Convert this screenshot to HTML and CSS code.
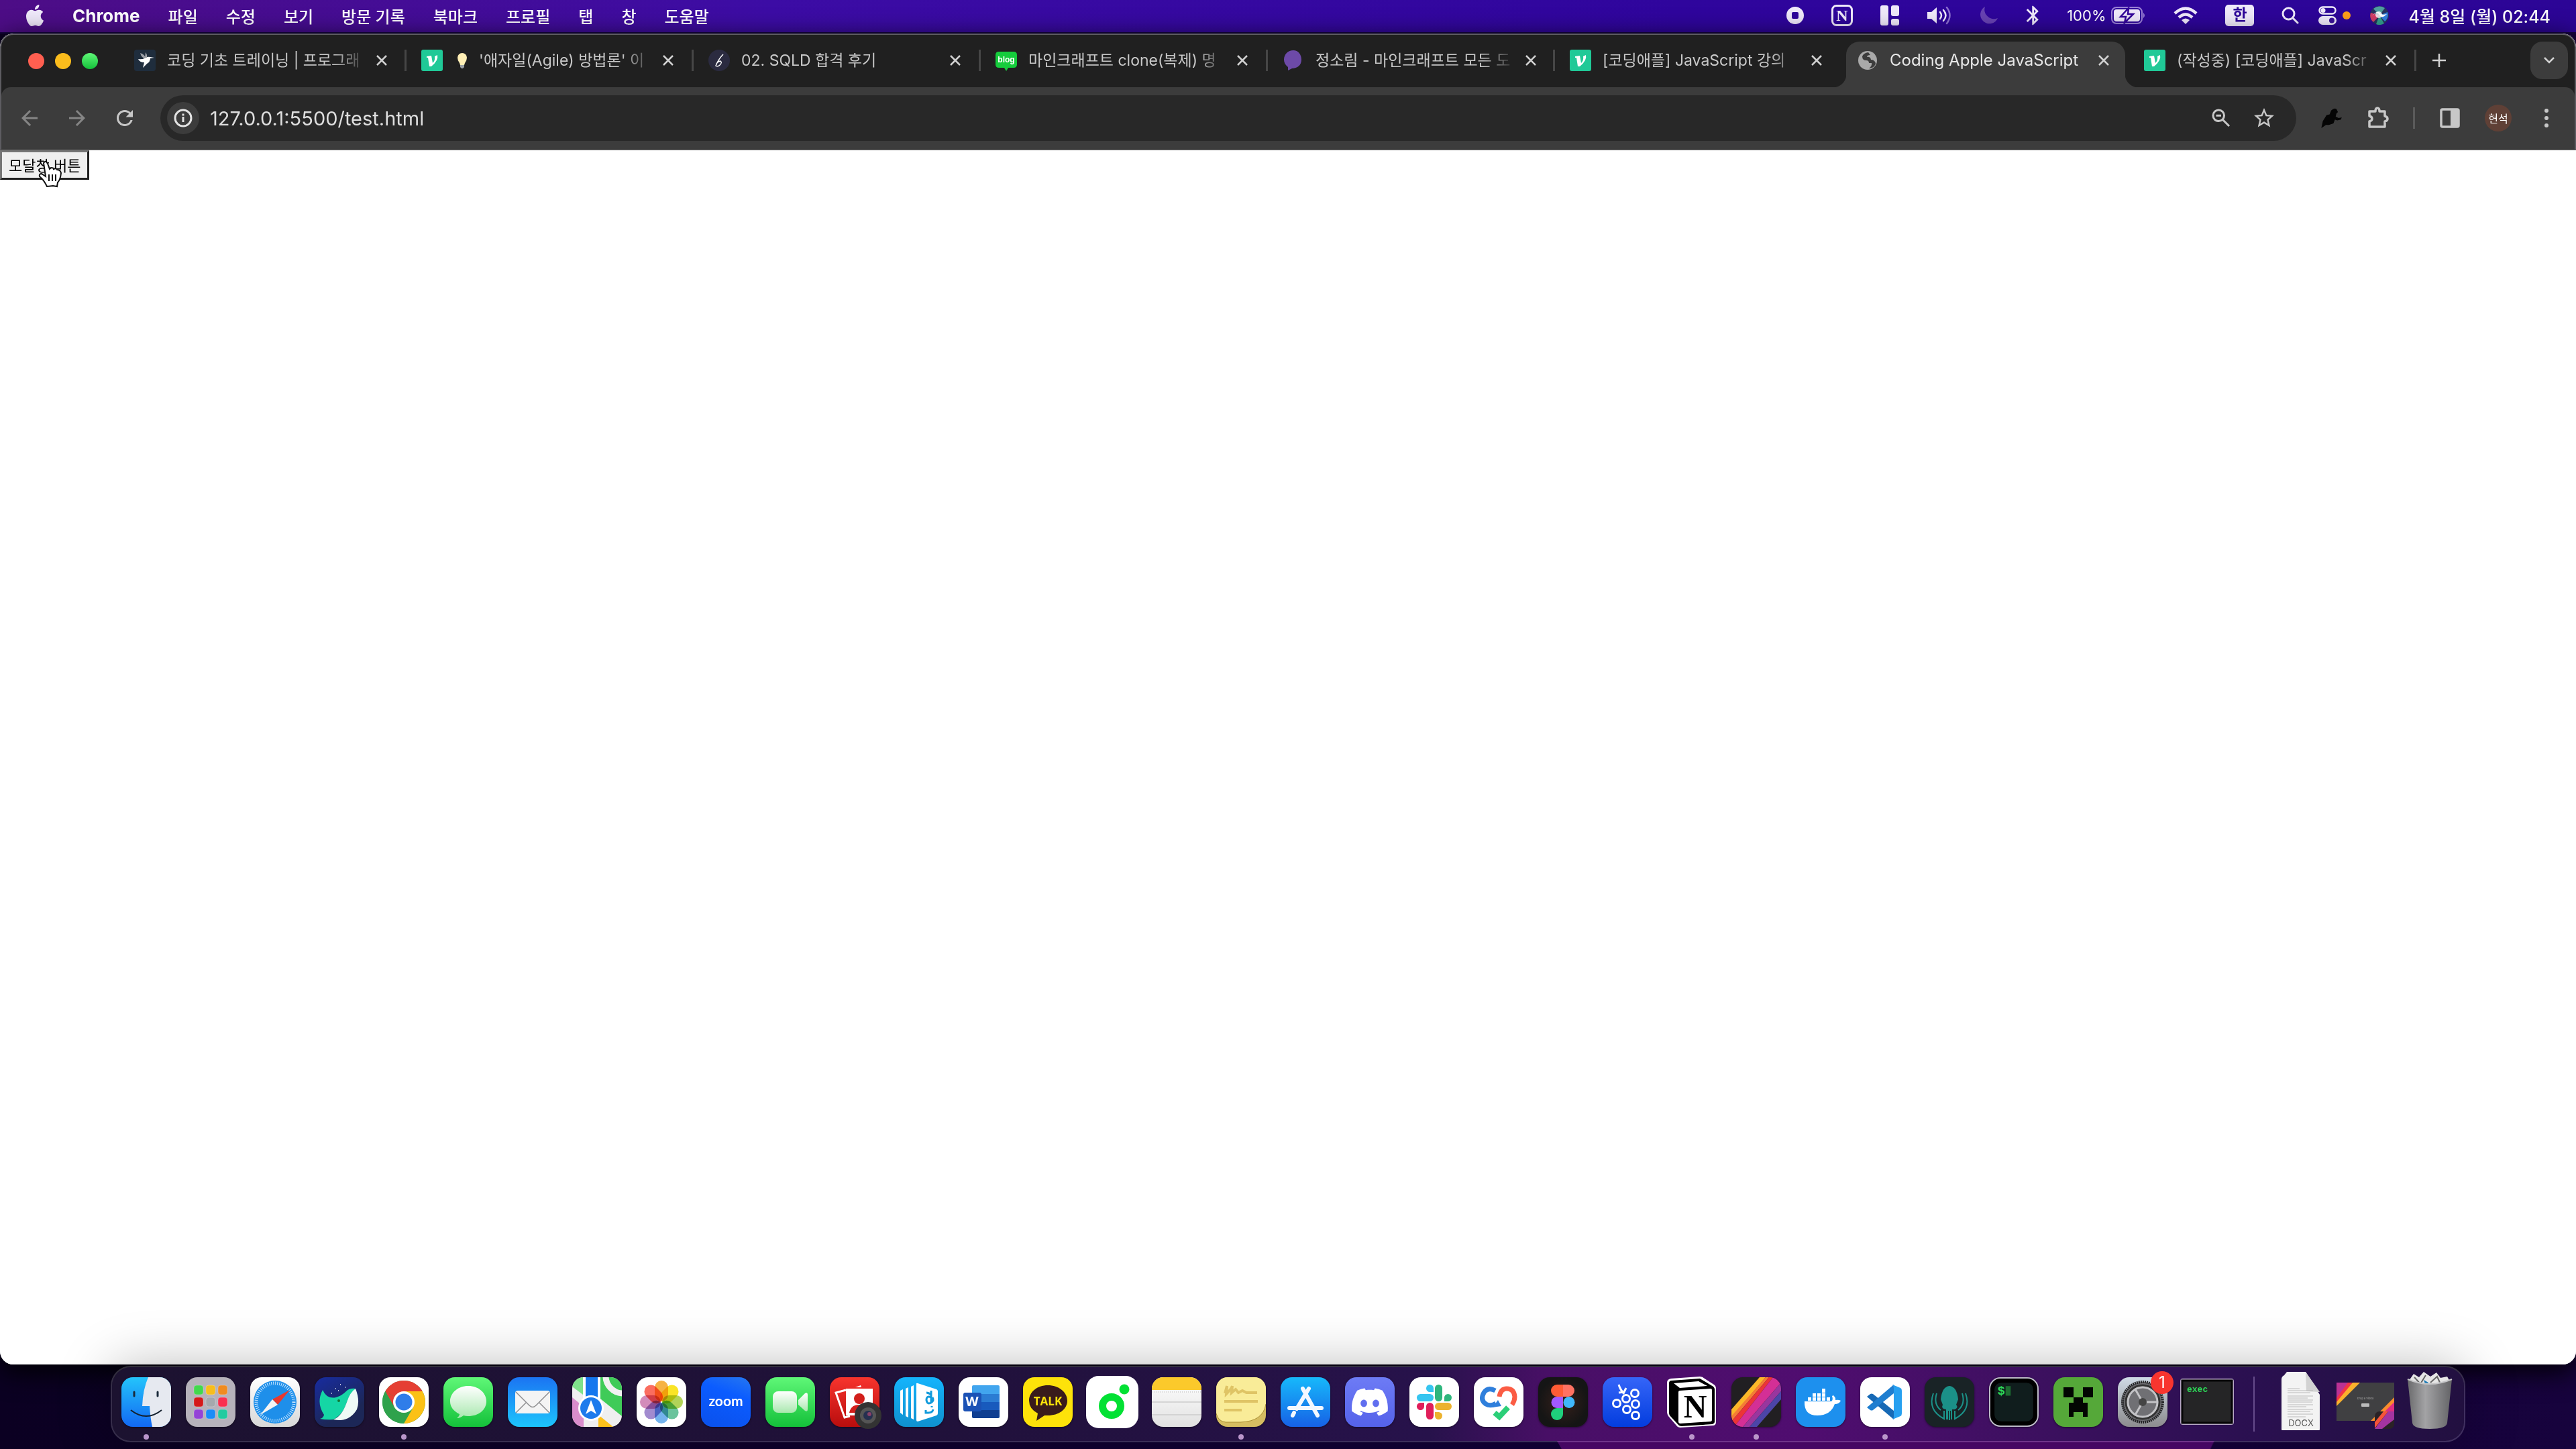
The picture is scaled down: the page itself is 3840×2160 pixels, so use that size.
FILE: index.html
```html
<!DOCTYPE html>
<html lang="ko">
<head>
    <meta charset="UTF-8">
    <meta name="viewport" content="width=device-width, initial-scale=1.0">
    <title>Coding Apple JavaScript</title>
    <link rel="stylesheet" href="styles.css">
</head>
<body>
    <header class="menubar">
        <nav class="menus">
            <svg class="apple" viewBox="3 0 18 24"><path d="M12.152 6.896c-.948 0-2.415-1.078-3.96-1.04-2.04.027-3.91 1.183-4.961 3.014-2.117 3.675-.546 9.103 1.519 12.09 1.013 1.454 2.208 3.09 3.792 3.039 1.52-.065 2.09-.987 3.935-.987 1.831 0 2.35.987 3.96.948 1.637-.026 2.676-1.48 3.676-2.948 1.156-1.688 1.636-3.325 1.662-3.415-.039-.013-3.182-1.221-3.22-4.857-.026-3.04 2.48-4.494 2.597-4.559-1.429-2.09-3.623-2.324-4.39-2.376-2-.156-3.675 1.09-4.61 1.09zM15.53 3.83c.843-1.012 1.4-2.427 1.245-3.83-1.207.052-2.662.805-3.532 1.818-.78.896-1.454 2.338-1.273 3.714 1.338.104 2.715-.688 3.559-1.701"/></svg>
            <button class="app-name">Chrome</button>
            <button>파일</button>
            <button>수정</button>
            <button>보기</button>
            <button>방문 기록</button>
            <button>북마크</button>
            <button>프로필</button>
            <button>탭</button>
            <button>창</button>
            <button>도움말</button>
        </nav>
        <div class="status">
            <svg width="26" height="26" viewBox="0 0 26 26"><path fill-rule="evenodd" d="M13 0a13 13 0 1 0 0 26 13 13 0 0 0 0-26zM10 8h6a2 2 0 0 1 2 2v6a2 2 0 0 1-2 2h-6a2 2 0 0 1-2-2v-6a2 2 0 0 1 2-2z"/></svg>
            <svg width="32" height="32" viewBox="0 0 32 32"><rect x="1.5" y="1.5" width="29" height="29" rx="6" fill="none" stroke="#efe9fa" stroke-width="3"/><text x="16" y="24" text-anchor="middle" class="serif-n small">N</text></svg>
            <svg width="28" height="30" viewBox="0 0 28 30"><rect width="12" height="30" rx="3"/><rect x="16" width="12" height="16" rx="3"/><rect x="16" y="20" width="12" height="10" rx="3"/></svg>
            <svg width="38" height="28" viewBox="0 0 38 28"><path d="M1 9h6l8-7v24l-8-7H1z"/><path d="M20 9q4 5 0 10M25 6q7 8 0 16" fill="none" stroke="#efe9fa" stroke-width="2.5" stroke-linecap="round"/><path d="M30 2q9 12 0 24" fill="none" stroke="#8d6fd0" stroke-width="2.5" stroke-linecap="round"/></svg>
            <svg width="28" height="28" viewBox="0 0 28 28"><path d="M8 1a13.5 13.5 0 1 0 19 17A14 14 0 0 1 8 1z" fill="#6843b3"/></svg>
            <svg width="20" height="30" viewBox="4.5 2 14 20"><path d="M17.71 7.71L12 2h-1v7.59L6.41 5 5 6.41 10.59 12 5 17.59 6.41 19 11 14.41V22h1l5.71-5.71-4.3-4.29 4.3-4.29zM13 5.83l1.88 1.88L13 9.59V5.83zm1.88 10.46L13 18.17v-3.76l1.88 1.88z"/></svg>
            <div class="battery">
                <span>100%</span>
                <svg width="52" height="26" viewBox="0 0 52 26"><rect x="1" y="1" width="45" height="24" rx="7" fill="none" stroke="#9a80d6" stroke-width="2"/><rect x="4" y="4" width="39" height="18" rx="4"/><path d="M48 9q4 4 0 8z" fill="#9a80d6"/><path d="M26 2L14 15h8l-2 9 13-13h-8z" stroke="#320599" stroke-width="2.5"/></svg>
            </div>
            <svg width="36" height="26" viewBox="0 0 36 26"><g fill="none" stroke="#efe9fa" stroke-width="4.5"><path d="M2 10Q18-5 34 10"/><path d="M8 16Q18 7 28 16"/></g><path d="M12 20q6-5 12 0l-6 6z"/></svg>
            <span class="ime">한</span>
            <div class="status-end">
                <svg width="26" height="26" viewBox="0 0 26 26"><g fill="none" stroke="#efe9fa" stroke-width="3" stroke-linecap="round"><circle cx="10.5" cy="10.5" r="8.5"/><path d="M17 17l7 7"/></g></svg>
                <svg width="48" height="28" viewBox="0 0 48 28"><rect x="1.5" y="1.5" width="24" height="10" rx="5" fill="none" stroke="#efe9fa" stroke-width="2.5"/><circle cx="7" cy="6.5" r="3.5"/><rect y="15" width="27" height="13" rx="6.5"/><circle cx="20" cy="21.5" r="4" fill="#3b129a"/><circle cx="42" cy="14" r="6" fill="#ff9f1a"/></svg>
                <svg width="28" height="28" viewBox="0 0 28 28"><circle cx="14" cy="14" r="14" fill="#27335f"/><path d="M14 14L5 4a14 14 0 0 1 17-1z" fill="#4f9ea0"/><path d="M14 14L1 10a13 13 0 0 0 4 14z" fill="#d23d67"/><path d="M14 14l12-5a13 13 0 0 1-4 14z" fill="#327fe0"/><path d="M14 14l-5 13a13 13 0 0 0 12-1z" fill="#329f8d"/><circle cx="13" cy="13" r="5" fill="#fff" opacity=".8"/><path d="M3 15q8-9 11-2 3 7 11-1-8 2-11-2-4-4-11 5z" fill="#fff"/></svg>
                <time>4월 8일 (월) 02:44</time>
            </div>
        </div>
    </header>

    <main class="window">
        <div class="chrome">
            <div class="tabstrip">
                <div class="lights"><i class="red"></i><i class="yellow"></i><i class="green"></i></div>
                <div class="tabs">
                    <div class="tab">
                        <svg class="favicon" viewBox="0 0 32 32"><rect width="32" height="32" rx="4" fill="#1f2d3d"/><path d="M6 14q6 1 9-1 4-3 9-2l6 1-6 1q0 5-5 8l-6 6 2-8q-7 0-9-5z" fill="#fff"/><path d="M9 5q7 2 8 8-6 0-8-8zM17 4q3 4 2 8h-3z" fill="#9b9fa6"/></svg>
                        <span class="tab-title">코딩 기초 트레이닝 | 프로그래</span>
                        <button class="close" aria-label="닫기"><svg viewBox="0 0 16 16"><path d="M1 1l14 14M15 1L1 15"/></svg></button>
                    </div>
                    <div class="tab">
                        <svg class="favicon" viewBox="0 0 32 32"><rect width="32" height="32" rx="3" fill="#20c997"/><path d="M8 10l7-1 2 11q4-4 3-10l4-2q2 8-9 17h-3L10 12H8z" fill="#fff"/></svg>
                        <span class="tab-title"><svg class="bulb" viewBox="0 0 16 24"><path d="M8 1a7 7 0 0 0-7 7q0 4 3 8l1 3h6l1-3q3-4 3-8a7 7 0 0 0-7-7z" fill="#ffefb5"/><path d="M5 19h6v3l-2 2H7l-2-2z" fill="#9aa0a6"/></svg>'애자일(Agile) 방법론' 이</span>
                        <button class="close" aria-label="닫기"><svg viewBox="0 0 16 16"><path d="M1 1l14 14M15 1L1 15"/></svg></button>
                    </div>
                    <div class="tab">
                        <svg class="favicon" viewBox="0 0 32 32"><circle cx="16" cy="16" r="16" fill="#2b2b40"/><path d="M22 7q-7 7-11 17 3 2 6-1 4-4 1-6-3 0-6 4" fill="none" stroke="#fff" stroke-width="1.5"/></svg>
                        <span class="tab-title">02. SQLD 합격 후기</span>
                        <button class="close" aria-label="닫기"><svg viewBox="0 0 16 16"><path d="M1 1l14 14M15 1L1 15"/></svg></button>
                    </div>
                    <div class="tab">
                        <svg class="favicon" viewBox="0 0 32 32"><path d="M5 3h22q5 0 5 5v14q0 5-5 5h-8l-3 5-3-5H5q-5 0-5-5V8q0-5 5-5z" fill="#15cc3c"/><text x="16" y="19" text-anchor="middle" class="blog">blog</text></svg>
                        <span class="tab-title">마인크래프트 clone(복제) 명</span>
                        <button class="close" aria-label="닫기"><svg viewBox="0 0 16 16"><path d="M1 1l14 14M15 1L1 15"/></svg></button>
                    </div>
                    <div class="tab">
                        <svg class="favicon" viewBox="0 0 32 32"><path d="M16 1c7 0 12 6 12 14S22 28 14 28l-6 3v-5C4 23 2 19 2 15 2 7 8 1 16 1z" fill="#6d4aa8"/></svg>
                        <span class="tab-title">정소림 - 마인크래프트 모든 도</span>
                        <button class="close" aria-label="닫기"><svg viewBox="0 0 16 16"><path d="M1 1l14 14M15 1L1 15"/></svg></button>
                    </div>
                    <div class="tab before-active">
                        <svg class="favicon" viewBox="0 0 32 32"><rect width="32" height="32" rx="3" fill="#20c997"/><path d="M8 10l7-1 2 11q4-4 3-10l4-2q2 8-9 17h-3L10 12H8z" fill="#fff"/></svg>
                        <span class="tab-title">[코딩애플] JavaScript 강의</span>
                        <button class="close" aria-label="닫기"><svg viewBox="0 0 16 16"><path d="M1 1l14 14M15 1L1 15"/></svg></button>
                    </div>
                    <div class="tab active">
                        <svg class="favicon" viewBox="0 0 32 32"><circle cx="16" cy="16" r="14" fill="#a9a9a9"/><path d="M17 4q-7 1-9 6 0 6 6 6 4 0 4 4h4q1 4-4 8 9-1 10-8-2-5-7-5-1-5-6-4 0-3 5-3z" fill="#3c3c3c"/></svg>
                        <span class="tab-title">Coding Apple JavaScript</span>
                        <button class="close" aria-label="닫기"><svg viewBox="0 0 16 16"><path d="M1 1l14 14M15 1L1 15"/></svg></button>
                    </div>
                    <div class="tab">
                        <svg class="favicon" viewBox="0 0 32 32"><rect width="32" height="32" rx="3" fill="#20c997"/><path d="M8 10l7-1 2 11q4-4 3-10l4-2q2 8-9 17h-3L10 12H8z" fill="#fff"/></svg>
                        <span class="tab-title">(작성중) [코딩애플] JavaScr</span>
                        <button class="close" aria-label="닫기"><svg viewBox="0 0 16 16"><path d="M1 1l14 14M15 1L1 15"/></svg></button>
                    </div>
                    <button class="new-tab" aria-label="새 탭"><svg viewBox="0 0 20 20"><path d="M10 0v20M0 10h20"/></svg></button>
                </div>
                <button class="tab-search" aria-label="탭 검색"><svg viewBox="0 0 16 10"><path d="M1 1l7 7 7-7"/></svg></button>
            </div>

            <div class="toolbar">
                <button class="tool dim" aria-label="뒤로"><svg viewBox="0 0 24 24"><path d="M20 11H7.83l5.59-5.59L12 4l-8 8 8 8 1.41-1.41L7.83 13H20v-2z"/></svg></button>
                <button class="tool dim" aria-label="앞으로"><svg viewBox="0 0 24 24"><path d="M12 4l-1.41 1.41L16.17 11H4v2h12.17l-5.58 5.59L12 20l8-8z"/></svg></button>
                <button class="tool" aria-label="새로고침"><svg viewBox="0 0 24 24"><path d="M17.65 6.35C16.2 4.9 14.21 4 12 4c-4.42 0-7.99 3.58-7.99 8s3.57 8 7.99 8c3.73 0 6.84-2.55 7.73-6h-2.08c-.82 2.33-3.04 4-5.65 4-3.31 0-6-2.69-6-6s2.69-6 6-6c1.66 0 3.14.69 4.22 1.78L13 11h7V4l-2.35 2.35z"/></svg></button>
                <div class="omnibox">
                    <button class="site-info" aria-label="사이트 정보"><svg viewBox="0 0 28 28"><circle cx="14" cy="14" r="12" fill="none" stroke="#e3e3e3" stroke-width="3"/><path d="M12.5 12h3v8h-3zM12.5 7.500h3v3h-3z"/></svg></button>
                    <input type="text" aria-label="주소" value="127.0.0.1:5500/test.html">
                    <button class="tool" aria-label="축소"><svg viewBox="0 0 24 24"><g fill="none" stroke="#c7c7c7" stroke-width="2"><circle cx="9.5" cy="9.5" r="5.5"/><path d="M13.5 13.5l6.5 6.5M7 9.5h5"/></g></svg></button>
                    <button class="tool" aria-label="북마크에 추가"><svg viewBox="0 0 24 24"><path d="M22 9.24l-7.19-.62L12 2 9.19 8.63 2 9.24l5.46 4.73L5.82 21 12 17.27 18.18 21l-1.63-7.03L22 9.24zM12 15.4l-3.76 2.27 1-4.28-3.32-2.88 4.38-.38L12 6.1l1.71 4.04 4.38.38-3.32 2.88 1 4.28L12 15.4z"/></svg></button>
                </div>
                <div class="extensions">
                    <button class="tool" aria-label="확장 프로그램"><svg viewBox="0 0 32 32"><path d="M3 29l2-9 5-8 4-1 2-5q4-4 7-2l2 4-2 2-1 4 4 2 4-1-1 3-5 1-3-1-2 5-6 2-4 0-4 3z" fill="#050505"/></svg></button>
                    <button class="tool" aria-label="확장 프로그램 목록"><svg viewBox="0 0 36 36"><path d="M5 8h9q0-5 3-5t3 5h8v7q4 1 4 4t-4 4v8H5v-8q4-1 4-4t-4-4z" fill="none" stroke="#c7c7c7" stroke-width="3.5" stroke-linejoin="round"/></svg></button>
                    <i class="divider"></i>
                    <button class="tool" aria-label="측면 패널"><svg viewBox="0 0 36 36"><rect x="5" y="5" width="26" height="26" rx="2" fill="none" stroke="#c7c7c7" stroke-width="3.5"/><path d="M19 5h12v26H19z"/></svg></button>
                    <button class="avatar">현석</button>
                    <button class="tool" aria-label="메뉴"><svg viewBox="0 0 36 36"><circle cx="18" cy="7" r="3"/><circle cx="18" cy="18" r="3"/><circle cx="18" cy="29" r="3"/></svg></button>
                </div>
            </div>
        </div>

        <section class="page">
            <button class="modal-btn">모달창 버튼</button>
            <svg class="pointer" viewBox="0 0 38 44"><path d="M9 5q3-5 6 1l3 8 2-2q4 0 4 2 4-2 5 1 5 0 6 5-1 10-5 14l-1 6-6-1-9 1q-4-9-11-15-1-4 3-4l6 4z" fill="#fff" stroke="#111" stroke-width="2"/><path d="M17 22v10M22 22v10M27 22v10" stroke="#111" stroke-width="2"/></svg>
        </section>
    </main>

    <footer class="dock-area">
        <div class="dock">
            <button class="app running" aria-label="Finder"><svg class="tile finder" viewBox="0 0 74 74"><path d="M40 0h34v74H46q-3-14-4-31H31Q32 18 40 0z" fill="#e6e9f0"/><path d="M19 22v6M54 22v6" stroke="#1b2a3b" stroke-width="3" stroke-linecap="round"/><path d="M14 49q23 18 46 0" fill="none" stroke="#14202e" stroke-width="2"/></svg></button>
            <button class="app" aria-label="Launchpad"><svg class="tile launchpad" viewBox="0 0 74 74"><g stroke="#fff" stroke-opacity=".25"><rect x="12" y="12" width="14" height="14" rx="4" fill="#42d84e"/><rect x="30" y="12" width="14" height="14" rx="4" fill="#f7bd1d"/><rect x="48" y="12" width="14" height="14" rx="4" fill="#f08b20"/><rect x="12" y="30" width="14" height="14" rx="4" fill="#d4191a"/><rect x="30" y="30" width="14" height="14" rx="4" fill="#a5a8ad"/><rect x="48" y="30" width="14" height="14" rx="4" fill="#fa3050"/><rect x="12" y="48" width="14" height="14" rx="4" fill="#9443d6"/><rect x="30" y="48" width="14" height="14" rx="4" fill="#1a8cf8"/><rect x="48" y="48" width="14" height="14" rx="4" fill="#22cba0"/></g></svg></button>
            <button class="app" aria-label="Safari"><svg class="tile silver" viewBox="0 0 74 74"><circle cx="37" cy="37" r="32" fill="#1e8fea"/><circle cx="37" cy="37" r="28" fill="none" stroke="#cfe9ff" stroke-width="5" stroke-dasharray="1 2"/><path d="M59 19L41 41l-8-8z" fill="#e8382f"/><path d="M15 56l18-23 8 8z" fill="#f4f4f4"/></svg></button>
            <button class="app" aria-label="Whale"><svg class="tile whale" viewBox="0 0 74 74"><path d="M12 19q6 14 20 11 8-2 15-9 5-5 14-4-7 6-13 20-5 18-20 26-10 1-20-1 5-1 6-6Q2 38 12 19z" fill="#15d6a5"/><path d="M61 17q7 18 2 31Q51 68 28 63q13-5 20-26 5-15 13-20z" fill="#eefaf6"/><circle cx="36" cy="35" r="2" fill="#173"/><path d="M38 11h1M31 17h1M25 24h1M46 15h1M35 20h1" stroke="#fff" stroke-width="1.5"/></svg></button>
            <button class="app running" aria-label="Chrome"><svg class="tile white" viewBox="0 0 74 74"><circle cx="37" cy="37" r="32" fill="#2fa24c"/><path d="M37 37L9.3 21A32 32 0 0 1 64.7 21z" fill="#e53f33"/><path d="M37 21h27.7A32 32 0 0 1 37 69l14-24z" fill="#fbc116"/><path d="M9.3 21L23 45l14-8z" fill="#e53f33"/><path d="M9.3 21L23 45q7 9 18 7l-4 17A32 32 0 0 1 9.3 21z" fill="#2fa24c"/><circle cx="37" cy="37" r="16" fill="#fff"/><circle cx="37" cy="37" r="12.5" fill="#2f7de9"/></svg></button>
            <button class="app" aria-label="Messages"><svg class="tile green" viewBox="0 0 74 74"><path d="M37 13c15 0 27 10 27 23S52 58 37 58q-4 0-7-1-5 4-10 4 4-3 4-6-14-7-14-19c0-13 12-23 27-23z" fill="url(#soft)"/></svg></button>
            <button class="app" aria-label="Mail"><svg class="tile mail" viewBox="0 0 74 74"><rect x="11" y="20" width="52" height="34" rx="4" fill="#f4f4f4"/><path d="M12 53l16-16M62 53L46 37M12 22l20 20q5 5 10 0l20-20" fill="none" stroke="#8e8e90" stroke-width="1.5"/></svg></button>
            <button class="app" aria-label="Maps"><svg class="tile maps" viewBox="0 0 74 74"><path d="M0 14l16 12V0H0z" fill="#7fe38b"/><path d="M20 0h18v40H20z" fill="#1577ee"/><path d="M16 0h4v36h-4zM38 0h4v40h-4z" fill="#fff"/><path d="M42 0h32v58L42 32z" fill="#3fcb58"/><path d="M50-4a26 26 0 0 0 26 28" fill="none" stroke="#f1f1f1" stroke-width="9"/><path d="M0 30l17 14v30H0z" fill="#d98dcc"/><path d="M39 74V56l22 18z" fill="#fdc11b"/><circle cx="28" cy="46" r="19" fill="#fff"/><circle cx="28" cy="46" r="16" fill="#1d7bec"/><path d="M28 34l8 21-8-5-8 5z" fill="#fff"/></svg></button>
            <button class="app" aria-label="Photos"><svg class="tile white" viewBox="0 0 74 74"><g class="petals"><rect x="27" y="5" width="20" height="31" rx="10" fill="#f5a623"/><rect x="27" y="5" width="20" height="31" rx="10" fill="#f9e000" transform="rotate(45 37 37)"/><rect x="27" y="5" width="20" height="31" rx="10" fill="#a5cc3a" transform="rotate(90 37 37)"/><rect x="27" y="5" width="20" height="31" rx="10" fill="#50b98b" transform="rotate(135 37 37)"/><rect x="27" y="5" width="20" height="31" rx="10" fill="#5ba6ea" transform="rotate(180 37 37)"/><rect x="27" y="5" width="20" height="31" rx="10" fill="#9276c7" transform="rotate(225 37 37)"/><rect x="27" y="5" width="20" height="31" rx="10" fill="#cc78ae" transform="rotate(270 37 37)"/><rect x="27" y="5" width="20" height="31" rx="10" fill="#fa5343" transform="rotate(315 37 37)"/></g></svg></button>
            <button class="app" aria-label="Zoom"><svg class="tile zoom" viewBox="0 0 74 74"><text x="37" y="43" text-anchor="middle" class="zoom-text">zoom</text></svg></button>
            <button class="app" aria-label="FaceTime"><svg class="tile green" viewBox="0 0 74 74"><rect x="11" y="21" width="36" height="32" rx="8" fill="url(#soft)"/><path d="M49 34l10-10q4-2 4 2v22q0 4-4 2l-10-9z" fill="url(#soft)"/></svg></button>
            <button class="app" aria-label="Photo Booth"><svg class="tile booth" viewBox="0 0 74 74"><path d="M24 19L9 23l13 37 8-2" fill="none" stroke="#fff" stroke-width="3"/><path d="M38 15l8-3 1 3z" fill="#fff"/><rect x="24" y="17" width="40" height="40" fill="#fff"/><circle cx="44" cy="32" r="8" fill="#d21f1b"/><path d="M29 53q2-12 15-12t15 12z" fill="#d21f1b"/><circle cx="57" cy="57" r="20" fill="#333"/><circle cx="57" cy="57" r="12" fill="#555"/><circle cx="57" cy="57" r="7" fill="#263050"/><circle cx="59" cy="55" r="3" fill="#8a4068"/></svg></button>
            <button class="app" aria-label="Millie"><svg class="tile ridi" viewBox="0 0 74 74"><path d="M9 20l4-2v38l-4-3zM17 17l4-2v45l-4-2zM25 14l4-2v51l-4-2zM33 10q0-2 2-1l28 9q2 1 2 3v33q0 2-2 3L35 66q-2 0-2-2z" fill="#fff"/><path d="M48 23q3 0 7 3M55 20v17M55 30q-7-3-7 4 1 7 7 4 5-3 2-8M47 49v4h4q6 0 7-5M56 43v2" fill="none" stroke="#129bdc" stroke-width="3"/></svg></button>
            <button class="app" aria-label="Word"><svg class="tile white" viewBox="0 0 74 74"><path d="M20 25V14q0-2 2-2h37q2 0 2 2v11z" fill="#41a5ee"/><path d="M20 25h41v12H20z" fill="#2b7cd3"/><path d="M20 37h41v12H20z" fill="#185abd"/><path d="M20 49h41v10q0 2-2 2H22q-2 0-2-2z" fill="#103f91"/><rect x="7" y="23" width="27" height="28" rx="3" fill="#1b52b5"/><text x="20" y="43" text-anchor="middle" class="word-w">W</text></svg></button>
            <button class="app" aria-label="KakaoTalk"><svg class="tile kakao" viewBox="0 0 74 74"><path d="M37 12c16 0 29 10 29 23S53 57 37 57h-5l-12 8 2-11Q9 47 9 35c0-13 12-23 28-23z" fill="#391b1b"/><text x="37" y="42" text-anchor="middle" class="talk">TALK</text></svg></button>
            <button class="app" aria-label="Naver"><svg class="tile white large" viewBox="0 0 74 74"><circle cx="36" cy="43" r="13.5" fill="none" stroke="#03e134" stroke-width="11"/><circle cx="55" cy="18" r="7.5" fill="#03e134"/></svg></button>
            <button class="app" aria-label="Notes"><svg class="tile notes" viewBox="0 0 74 74"><path d="M0 0h74v19H0z" fill="#fbc92b"/><path d="M0 22h74" stroke="#b8b8b8" stroke-dasharray="1 2"/><path d="M0 37h74M0 56h74" stroke="#cbcbcb" stroke-width="1.5"/></svg></button>
            <button class="app running" aria-label="Stickies"><svg class="tile stickies" viewBox="0 0 74 74"><path d="M0 0h74v40Q70 66 36 67H14Q3 66 0 54z" fill="#f9ec98"/><path d="M0 54q3 12 14 13h22q34-1 38-27" fill="none" stroke="#a98f36"/><path d="M13 24l3-11-1 12q8-8 9-12l-1 10 6-5 4 5 6-3 6 3h16M12 36h50M12 49h26" fill="none" stroke="#dfc465" stroke-width="4"/></svg></button>
            <button class="app" aria-label="App Store"><svg class="tile store" viewBox="0 0 74 74"><path d="M33 17l22 40M42 17L24 47M13 46h48M20 53l-2 4" fill="none" stroke="#f3f8ff" stroke-width="6" stroke-linecap="round"/></svg></button>
            <button class="app" aria-label="Discord"><svg class="tile discord" viewBox="0 0 74 74"><path transform="translate(10 10) scale(2.25)" fill="#fff" d="M20.317 4.37a19.8 19.8 0 0 0-4.885-1.515.074.074 0 0 0-.079.037c-.211.375-.445.865-.608 1.25-1.845-.276-3.68-.276-5.487 0-.164-.393-.406-.874-.618-1.25a.077.077 0 0 0-.078-.037A19.7 19.7 0 0 0 3.677 4.37C.533 9.046-.319 13.58.099 18.058c2.053 1.508 4.072 2.48 6.024 3.086.5-.66.96-1.35 1.31-2.05-.7-.28-1.34-.59-1.96-.96l.46-.37c3.928 1.793 8.18 1.793 12.061 0l.46.37c-.62.37-1.27.69-1.96.96.36.7.8 1.39 1.31 2.05 1.961-.607 3.98-1.579 6.03-3.086.5-5.177-.838-9.674-3.517-13.688zM8.02 15.331c-1.183 0-2.157-1.086-2.157-2.419s.956-2.419 2.157-2.419c1.211 0 2.176 1.095 2.157 2.419 0 1.333-.956 2.419-2.157 2.419zm7.975 0c-1.183 0-2.157-1.086-2.157-2.419s.955-2.419 2.157-2.419c1.211 0 2.176 1.095 2.157 2.419 0 1.333-.946 2.419-2.157 2.419z"/></svg></button>
            <button class="app" aria-label="Slack"><svg class="tile white" viewBox="0 0 74 74"><g fill="#36c5f0"><rect x="11" y="25" width="25" height="11" rx="5.5"/><path d="M36 22h-5.5a5.5 5.5 0 1 1 5.5-5.5z"/></g><g fill="#2eb67d"><rect x="38" y="11" width="11" height="25" rx="5.5"/><path d="M52 36v-5.5a5.5 5.5 0 1 1 5.5 5.5z"/></g><g fill="#e01e5a"><rect x="25" y="38" width="11" height="25" rx="5.5"/><path d="M22 38v5.5a5.5 5.5 0 1 1-5.5-5.5z"/></g><g fill="#ecb22e"><rect x="38" y="38" width="25" height="11" rx="5.5"/><path d="M38 52h5.5a5.5 5.5 0 1 1-5.5 5.5z"/></g></svg></button>
            <button class="app" aria-label="Swit"><svg class="tile white" viewBox="0 0 74 74"><g fill="none" stroke-width="7"><path d="M32 20Q21 14 15 23q-6 11 3 17 7 4 15-1" stroke="#2f7fdc"/><path d="M28 45l8-11 5 9z" fill="#2f7fdc"/><path d="M38 29q2-12 11-12 11 0 12 12 0 6-4 12" stroke="#fb5c44"/><path d="M31 53l7 6 13-14" stroke="#2bcf78" stroke-width="8"/></g></svg></button>
            <button class="app" aria-label="Figma"><svg class="tile figma" viewBox="0 0 74 74"><path d="M28 11h9v18h-9a9 9 0 0 1 0-18z" fill="#ff5c35"/><path d="M37 11h8a9 9 0 0 1 0 18h-8z" fill="#ff7262"/><path d="M28 29h9v17h-9a8.5 8.5 0 0 1 0-17z" fill="#a259ff"/><circle cx="46" cy="37.5" r="8.5" fill="#40b8fb"/><path d="M28 46h9v9a9 9 0 1 1-9-9z" fill="#1fcf7c"/></svg></button>
            <button class="app" aria-label="Podo"><svg class="tile podo" viewBox="0 0 74 74"><g fill="none" stroke="#fff" stroke-width="3"><circle cx="48" cy="24" r="5.5"/><circle cx="35" cy="32" r="5.5"/><circle cx="21" cy="39" r="5.5"/><circle cx="49" cy="40" r="5.5"/><circle cx="36" cy="48" r="5.5"/><circle cx="49" cy="57" r="5.5"/><path d="M24 11q2 7 8 14M24 23l8-1 3-6"/></g></svg></button>
            <button class="app running" aria-label="Notion"><svg class="tile bare" viewBox="0 0 74 74"><path d="M6 2l43-3q4 0 7 3l14 9q3 2 3 6v50q0 5-5 5l-48 3q-4 0-6-3L2 58Q0 55 0 52V8q0-5 6-6z" fill="#fff"/><path d="M7 5l42-3 20 12q2 2 2 4v48q0 3-4 4l-46 3q-3 0-5-3L4 57q-1-2-1-4V9q0-4 4-4z"/><path d="M10 9l37-3 13 7-41 3z" fill="#fff"/><path d="M19 20l46-3q2 0 2 2v44q0 3-2 3l-45 3q-3 0-3-3V22q0-2 2-2z" fill="#fff"/><text x="42" y="60" text-anchor="middle" class="serif-n">N</text></svg></button>
            <button class="app running" aria-label="Screen Studio"><svg class="tile stripes" viewBox="0 0 74 74"><path d="M42 0h9L0 60V48z" fill="#fbb829"/><path d="M51 0h5L0 66v-8z" fill="#f57c35"/><path d="M56 0h6L4 74H0V66z" fill="#ec3437"/><path d="M62 0h12v8L17 74H4z" fill="#d42f96"/><path d="M74 8v13L27 74H17z" fill="#99369e"/><path d="M74 21v12L38 74H27z" fill="#4c45a8"/></svg></button>
            <button class="app" aria-label="Docker"><svg class="tile docker" viewBox="0 0 74 74"><path d="M13 36h40q3-2 1-8l2-1q4 4 3 7 5-1 8 1-2 5-9 5-6 17-26 17-20 0-19-21z" fill="#fff"/><path d="M18 30h5v5h-5zM25 30h5v5h-5zM32 30h5v5h-5zM39 30h5v5h-5zM46 30h5v5h-5zM25 24h5v5h-5zM32 24h5v5h-5zM39 24h5v5h-5zM39 17h5v6h-5z" fill="#fff"/></svg></button>
            <button class="app running" aria-label="VS Code"><svg class="tile white" viewBox="0 0 74 74"><path d="M10 29l5-4q2-1 4 0l31 25v13z" fill="#1769b5"/><path d="M10 45l5 4q2 1 4 0l31-25V11z" fill="#1f7ed0"/><path d="M48 11l12 5q2 1 2 4v34q0 3-2 4l-12 5q2-1 2-5V16q0-3-2-5z" fill="#27a0f0"/></svg></button>
            <button class="app" aria-label="GitKraken"><svg class="tile kraken" viewBox="0 0 74 74"><path d="M37 13q11 1 13 20l-3 8q4 4-2 7h-4v15h-2V50h-1v14h-2V50h-1v13h-3V48q-8-1-5-7l-3-8q2-19 13-20z" fill="#1b9188"/><g fill="none" stroke="#1b9188" stroke-width="2"><path d="M13 24q-9 25 16 38V50M61 24q9 25-16 38V50M18 24q-5 16 6 25M56 24q5 16-6 25"/></g></svg></button>
            <button class="app" aria-label="iTerm"><svg class="tile iterm" viewBox="0 0 74 74"><rect x="4" y="4" width="66" height="66" rx="13" fill="#101d1d" stroke="#000" stroke-width="5"/><text x="11" y="25" class="prompt">$</text><path d="M24 12h8v15h-8z" fill="#1d6c30"/></svg></button>
            <button class="app" aria-label="Minecraft"><svg class="tile creeper" viewBox="0 0 74 74"><path d="M15 15h15v15H15zM44 15h15v15H44zM30 30h14v8h7v21h-7v-7H30v7h-7V38h7z" fill="#020602"/></svg></button>
            <button class="app" aria-label="System Settings"><svg class="tile settings" viewBox="0 0 74 74"><circle cx="37" cy="37" r="30" fill="#707074" stroke="#252527" stroke-width="4" stroke-dasharray="2 1"/><g fill="none" stroke="#c3c3c6" stroke-width="3"><circle cx="37" cy="37" r="25" stroke="#333"/><circle cx="37" cy="37" r="22"/><path d="M37 37h22M37 37L26 18M37 37L26 56"/></g><circle cx="37" cy="37" r="6" fill="#444"/></svg><span class="badge">1</span></button>
            <button class="app" aria-label="exec"><svg class="tile bare" viewBox="0 0 74 74"><rect x="-2" y="3" width="78" height="67" rx="3" fill="#252526" stroke="#b7a8c4" stroke-width="2"/><rect y="5" width="74" height="63" fill="none" stroke="#050505" stroke-width="3"/><text x="7" y="22" class="exec">exec</text></svg></button>
            <i class="dock-divider"></i>
            <button class="app" aria-label="문서"><svg class="tile bare" viewBox="0 0 74 74"><path d="M12-3l4-5h28l21 34v52q0 1-1 1H9q-1 0-1-1V3q0-4 4-6z" fill="#f3f3f3"/><path d="M44-8l21 30-20-1z" fill="#d2d2d2"/><path d="M17 17h18M17 20h38M17 23h34M17 28h38M17 31h30M17 34h38M17 37h37M17 41h38M17 44h28M17 48h38M17 51h34M17 55h38M17 59h27" stroke="#bababa"/><text x="37" y="73" text-anchor="middle" class="docx">DOCX</text></svg></button>
            <button class="app" aria-label="미리보기"><svg class="tile bare" viewBox="0 0 74 74"><path d="M-6 8h86v57H-6z" fill="#404042"/><path d="M-6 8h22L-6 38z" fill="#bb3294"/><path d="M11 8h7L-6 40v-9z" fill="#f13446"/><path d="M18 8h11L-6 43v-6z" fill="#fbb12c"/><path d="M80 30v35H45z" fill="#fa8c2c"/><path d="M80 37v28H52z" fill="#dd2d83"/><rect x="51" y="51" width="29" height="26" rx="7" fill="#2a2226"/><path d="M71 51h9v12L62 77H51z" fill="#a434a0"/><path d="M64 51h7L51 76v-9z" fill="#f6533a"/><rect x="31" y="39" width="12" height="5" rx="1" fill="#bbb"/><text x="37" y="33" text-anchor="middle" class="drop">Drop a Video</text></svg></button>
            <button class="app" aria-label="휴지통"><svg class="tile bare" viewBox="0 0 74 74"><path d="M6 5l7-10 8 5 7-8 10 7 9-6 6 8 10-2 5 9-5 8H12z" fill="#e6e6e6"/><path d="M14 0l9 10 8-13M38 8l10-9 5 11" fill="none" stroke="#666" stroke-width="2"/><path d="M28 4l7 4-4 5z" fill="#1979b5"/><path d="M4 3q33 14 66 0l-7 65q-1 9-26 9t-26-9z" fill="url(#bin)"/><path d="M4 3q33 14 66 0" fill="none" stroke="#c5c5c7" stroke-width="2"/></svg></button>
        </div>
    </footer>

    <svg class="defs" aria-hidden="true">
        <linearGradient id="soft" x2="0" y2="1"><stop stop-color="#fff"/><stop offset="1" stop-color="#a9e8af"/></linearGradient>
        <linearGradient id="bin"><stop stop-color="#6a6a6c"/><stop offset=".4" stop-color="#a3a3a5"/><stop offset="1" stop-color="#636366"/></linearGradient>
    </svg>
</body>
</html>
```

FILE: styles.css
```css
* {
    box-sizing: border-box;
}

body {
    margin: 0;
    min-height: 100vh;
    display: flex;
    flex-direction: column;
    overflow: hidden;
    font-family: Inter, 'Noto Sans CJK KR', sans-serif;
    background:
        linear-gradient(60deg, transparent 0 15px, #500871 16px 100%) 2310px 100% / 500px 60px no-repeat,
        linear-gradient(115deg, #500871 0 464px, transparent 466px) 2810px 100% / 500px 60px no-repeat,
        linear-gradient(90deg, #0b0022, #13003a 60%, #17033d);
}

button {
    padding: 0;
    border: 0;
    background: none;
    color: inherit;
    font: inherit;
}

svg {
    display: block;
    flex: none;
}

/* menu bar */
.menubar {
    display: flex;
    justify-content: space-between;
    align-items: center;
    height: 50px;
    padding: 0 38px 2px;
    border-bottom: 2px solid #14043f;
    background: linear-gradient(90deg, #4d0d86, #3c0ca5 30%, #2f059d 65%, #2c0596);
    color: #fff;
    font-size: 24px;
    font-weight: 500;
}

.menus,
.status,
.status-end {
    display: flex;
    align-items: center;
    gap: 42px;
}

.menubar svg {
    fill: #efe9fa;
}

.apple {
    width: 28px;
    height: 32px;
}

.app-name {
    font-size: 26px;
    font-weight: 700;
}

.status {
    gap: 41px;
}

.status-end {
    gap: 29px;
}

.status time {
    font-size: 25px;
}

.battery {
    display: flex;
    align-items: center;
    gap: 8px;
    font-size: 22px;
    font-weight: 400;
}

.ime {
    width: 43px;
    height: 32px;
    border-radius: 5px;
    background: #efe9fa;
    color: #2d0599;
    font-size: 23px;
    font-weight: 700;
    line-height: 30px;
    text-align: center;
}

/* browser window */
.window {
    flex: 1;
    display: flex;
    flex-direction: column;
    overflow: hidden;
    border-radius: 20px;
    background: #fff;
    box-shadow: 0 10px 40px #000;
}

.chrome {
    border: 2px solid #5d5c61;
    border-bottom-color: #4b4b4b;
    border-radius: 20px 20px 0 0;
    overflow: hidden;
    background: #202020;
}

.tabstrip {
    display: flex;
    height: 78px;
    padding: 10px 10px 0 40px;
}

.lights {
    display: flex;
    gap: 16px;
    width: 136px;
    padding-top: 17px;
}

.lights i {
    width: 24px;
    height: 24px;
    border-radius: 50%;
}

.red {
    background: #ff5f50;
}

.yellow {
    background: #fbbc1c;
}

.green {
    background: #1fc840;
}

.tabs {
    flex: 1;
    display: flex;
    min-width: 0;
}

.tab {
    position: relative;
    z-index: 0;
    display: flex;
    align-items: center;
    flex: 0 1 428px;
    min-width: 0;
    padding: 0 26px 12px 22px;
    background: linear-gradient(#464646, #464646) right 12px / 3px 32px no-repeat;
    color: #c7c7c7;
}

.tab.active,
.tab.before-active {
    background: none;
}

.tab.active {
    color: #e8e8e8;
}

.tab.active::before {
    content: '';
    position: absolute;
    z-index: -1;
    inset: 0 6px;
    border-radius: 20px 20px 0 0;
    background: #3c3c3c;
}

.tab.active::after {
    content: '';
    position: absolute;
    z-index: -1;
    inset: auto -14px 0;
    height: 20px;
    background:
        radial-gradient(circle at 0 0, transparent 20px, #3c3c3c 21px) left / 20px 20px no-repeat,
        radial-gradient(circle at 100% 0, transparent 20px, #3c3c3c 21px) right / 20px 20px no-repeat;
}

.favicon {
    width: 32px;
    height: 32px;
    margin-right: 17px;
}

.blog {
    fill: #fff;
    font: bold 12px 'Liberation Sans', sans-serif;
}

.tab-title {
    flex: 1;
    display: flex;
    align-items: center;
    white-space: nowrap;
    font-size: 23px;
    line-height: 36px;
    mask-image: linear-gradient(90deg, #000 250px, transparent 300px);
}

.active .tab-title {
    font-size: 24px;
    mask-image: none;
}

.bulb {
    width: 16px;
    height: 24px;
    margin: 0 17px 0 4px;
}

.close {
    width: 24px;
    margin-left: 21px;
}

.close svg {
    width: 16px;
    margin: auto;
}

.close svg,
.new-tab svg,
.tab-search svg {
    fill: none;
    stroke: #d0d0d0;
    stroke-width: 2.5;
}

.new-tab {
    margin-left: 24px;
    padding-bottom: 12px;
}

.new-tab svg {
    width: 20px;
}

.tab-search {
    width: 56px;
    height: 56px;
    border-radius: 18px;
    background: #3c3c3c;
}

.tab-search svg {
    width: 16px;
    margin: auto;
}

.toolbar {
    display: flex;
    align-items: center;
    height: 92px;
    padding: 0 24px;
    border-radius: 14px 14px 0 0;
    background: #3c3c3c;
}

.tool {
    width: 36px;
    height: 36px;
    margin-right: 35px;
    fill: #c7c7c7;
}

.tool svg {
    width: 36px;
    height: 36px;
}

.dim {
    fill: #858585;
}

.omnibox {
    flex: 1;
    display: flex;
    align-items: center;
    height: 68px;
    padding: 0 30px 0 10px;
    border-radius: 34px;
    background: #282828;
}

.omnibox .tool {
    margin: 0 0 0 28px;
}

.site-info {
    width: 48px;
    height: 48px;
    border-radius: 50%;
    background: #3c3c3c;
    fill: #e3e3e3;
}

.site-info svg {
    width: 28px;
    margin: auto;
}

.omnibox input {
    flex: 1;
    margin-left: 16px;
    padding: 0;
    border: 0;
    outline: 0;
    background: none;
    color: #dedede;
    font: 29px Inter, sans-serif;
}

.extensions {
    display: flex;
    align-items: center;
    gap: 34px;
    padding-left: 34px;
}

.extensions .tool {
    margin: 0;
}

.divider {
    width: 3px;
    height: 32px;
    background: #5b5b5b;
}

.avatar {
    width: 40px;
    height: 40px;
    border-radius: 50%;
    background: #5f4036;
    color: #fff;
    font-size: 16px;
}

.page {
    position: relative;
    flex: 1;
    display: flex;
    align-items: flex-start;
    background: #fff;
}

.modal-btn {
    padding: 5px 10px 3px;
    border: 3px solid;
    border-color: #767676 #1f1f1f #1f1f1f #767676;
    background: #efefef;
    color: #000;
    font-size: 22px;
    line-height: 30px;
}

/* mouse pointer resting on the button */
.pointer {
    position: absolute;
    left: 56px;
    top: 14px;
    width: 38px;
    height: 44px;
}

/* dock */
.dock-area {
    position: relative;
    display: flex;
    justify-content: center;
    padding: 2px 0 10px;
}

.dock {
    display: flex;
    gap: 22px;
    height: 114px;
    padding: 15px 14px 0;
    border: 2px solid rgba(255, 255, 255, 0.18);
    border-radius: 30px;
    background: linear-gradient(90deg, #1c1230, #20113a 35%, #27124b 56%, #480f66 61%, #500d70 72%, #3c105f 82%, #2a1050 91%, #221040);
    background-clip: padding-box;
    box-shadow: 0 0 80px rgba(0, 0, 0, 0.27);
}

.app {
    position: relative;
    width: 74px;
    height: 74px;
}

.running::after {
    content: '';
    position: absolute;
    left: 33px;
    bottom: -19px;
    width: 8px;
    height: 8px;
    border-radius: 50%;
    background: #b995ca;
}

.tile {
    width: 74px;
    height: 74px;
    border-radius: 17px;
    box-shadow: 0 1px 3px rgba(0, 0, 0, 0.5);
}

.bare {
    overflow: visible;
    border-radius: 0;
    box-shadow: none;
}

.large {
    box-shadow: 0 0 0 2px #fff;
}

.finder {
    background: linear-gradient(#24c4fb, #1268f3);
}

.launchpad {
    background: #b6b2bb;
}

.silver {
    background: linear-gradient(#fff, #d8d8d8);
}

.whale {
    background: linear-gradient(150deg, #182ca0, #1c2757 70%);
}

.white {
    background: #fff;
}

.green {
    background: linear-gradient(#5ff777, #14c13a);
}

.mail {
    background: linear-gradient(#1b74f2, #1dc5fc);
}

.maps {
    background: #efefef;
}

.petals rect {
    opacity: 0.85;
    mix-blend-mode: multiply;
}

.zoom {
    background: linear-gradient(200deg, #2677f0, #0b5cff 35%, #0a50eb);
}

.zoom-text {
    fill: #fff;
    font: bold 21px Lato, sans-serif;
}

.booth {
    overflow: visible;
    background: linear-gradient(#f7342d, #b90d0d);
}

.ridi {
    background: linear-gradient(#15b4fc, #0f91cf);
}

.word-w {
    fill: #fff;
    font: bold 20px 'Open Sans', sans-serif;
}

.kakao {
    background: #fde20a;
}

.talk {
    fill: #fde20a;
    font: bold 17px 'Open Sans', sans-serif;
}

.notes {
    background: linear-gradient(#fff, #e1e1e1);
}

.stickies {
    background: #d5bd61;
}

.store {
    background: linear-gradient(#17b9fb, #1661e6);
}

.discord {
    background: linear-gradient(#6d7bf5, #5562ea);
}

.figma {
    background: radial-gradient(#36201b, #151515 70%);
}

.podo {
    background: linear-gradient(#3565f8, #033dde);
}

.serif-n {
    fill: #000;
    font: bold 48px 'Liberation Serif', serif;
}

.serif-n.small {
    fill: #efe9fa;
    font-size: 24px;
}

.stripes {
    background: #211f22;
}

.docker {
    background: #1d90ee;
}

.kraken {
    background: #192326;
}

.iterm {
    border: 2px solid #bcbac7;
    background: #000;
}

.prompt,
.exec {
    fill: #2ddb58;
    font: bold 20px 'Liberation Mono', monospace;
}

.exec {
    font-size: 13px;
}

.creeper {
    background: #55a839;
}

.settings {
    background: linear-gradient(#cfdae6, #8c8c8e);
}

.badge {
    position: absolute;
    top: -9px;
    right: -9px;
    width: 34px;
    height: 34px;
    border-radius: 50%;
    background: #f8352f;
    color: #fff;
    font-size: 24px;
    line-height: 34px;
    text-align: center;
}

.dock-divider {
    width: 2px;
    height: 82px;
    margin: -1px 10px 0;
    background: #664c8a;
}

.docx {
    fill: #555;
    font: 13px Inter, sans-serif;
}

.drop {
    fill: #aaa;
    font: 4px Inter, sans-serif;
}

.defs {
    position: absolute;
    width: 0;
    height: 0;
}
```
